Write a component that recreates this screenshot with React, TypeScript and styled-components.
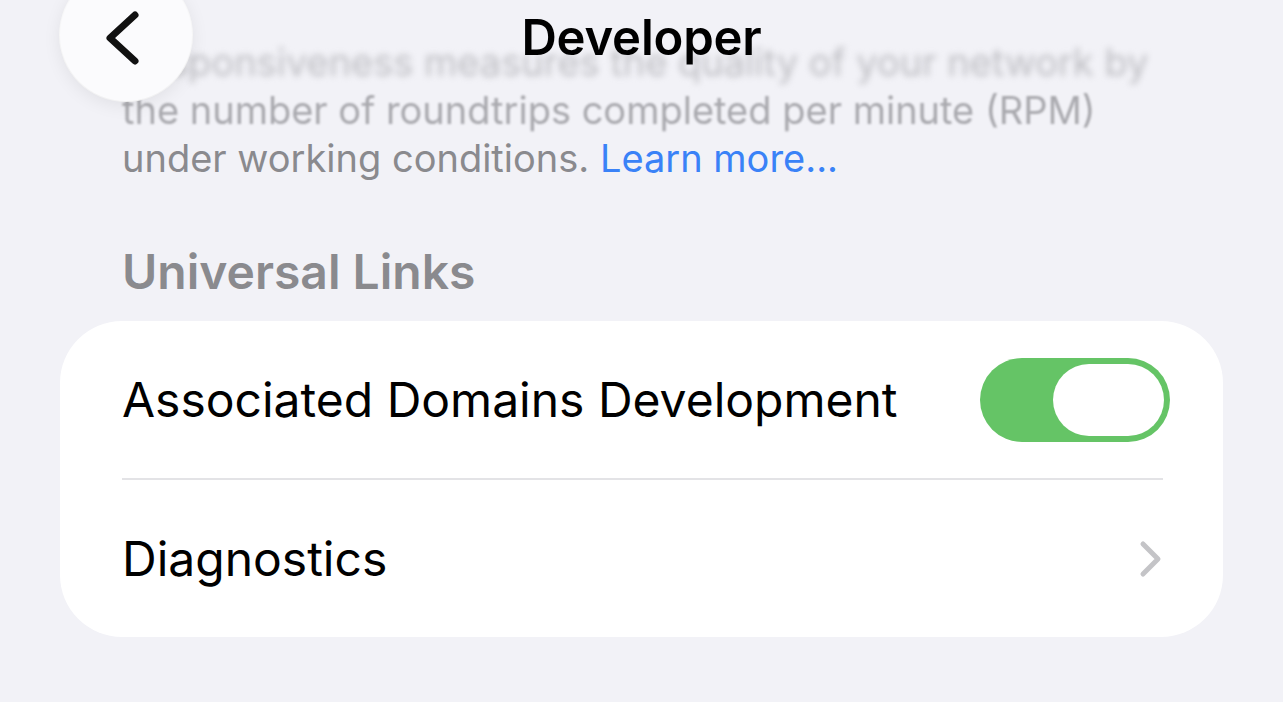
import React from 'react';
import styled, { createGlobalStyle } from 'styled-components';

const GlobalStyle = createGlobalStyle`
  html, body {
    margin: 0;
    padding: 0;
    background: #f2f2f7;
    font-family: Inter, "Noto Sans", sans-serif;
    overflow: hidden;
  }
`;

const footerLines = [
  { text: 'Responsiveness measures the quality of your network by', blur: 3.2, color: '#bdbdc2' },
  { text: 'the number of roundtrips completed per minute (RPM)', blur: 1.2, color: '#a9a9ae' },
];

const App: React.FC = () => {
  return (
    <Screen>
      <GlobalStyle />
      <NavBar>
        <BackButton aria-label="Back">
          <svg width="40" height="56" viewBox="0 0 40 56">
            <path
              d="M31 5 L6 28 L31 51"
              fill="none"
              stroke="#111"
              strokeWidth="7"
              strokeLinecap="round"
              strokeLinejoin="round"
            />
          </svg>
        </BackButton>
        <Title>Developer</Title>
      </NavBar>

      <Content>
        <Footer>
          {footerLines.map((line) => (
            <FooterLine key={line.text} $blur={line.blur} $color={line.color}>
              {line.text}
            </FooterLine>
          ))}
          <FooterLine $blur={0} $color="#8a8a8e">
            under working conditions. <LearnMore>Learn more...</LearnMore>
          </FooterLine>
        </Footer>

        <SectionHeader>Universal Links</SectionHeader>

        <Card>
          <Row>
            <RowLabel>Associated Domains Development</RowLabel>
            <Toggle>
              <Knob />
            </Toggle>
          </Row>
          <Separator />
          <Row>
            <RowLabel>Diagnostics</RowLabel>
            <svg width="24" height="38" viewBox="0 0 24 38">
              <path
                d="M4 4 L19 19 L4 34"
                fill="none"
                stroke="#c4c4c7"
                strokeWidth="5"
                strokeLinecap="round"
                strokeLinejoin="round"
              />
            </svg>
          </Row>
        </Card>
      </Content>
    </Screen>
  );
};

const Screen = styled.div`
  position: relative;
  width: 1283px;
  height: 702px;
  overflow: hidden;
  background: #f2f2f7;
`;

const NavBar = styled.div`
  position: absolute;
  top: 0;
  left: 0;
  right: 0;
  height: 80px;
  z-index: 2;
  display: flex;
  justify-content: center;
`;

const BackButton = styled.div`
  position: absolute;
  left: 60px;
  top: -31px;
  width: 132px;
  height: 132px;
  border-radius: 50%;
  background: #fbfbfd;
  box-shadow: 0 4px 18px rgba(0, 0, 0, 0.08), 0 0 0 1px rgba(255, 255, 255, 0.9);
  display: flex;
  align-items: center;
  justify-content: center;
  padding-top: 6px;
  padding-right: 4px;
  box-sizing: border-box;
`;

const Title = styled.div`
  margin-top: 10px;
  font-size: 49px;
  font-weight: 600;
  color: #000;
  line-height: 56px;
  letter-spacing: -0.2px;
`;

const Content = styled.div`
  padding: 38px 60px 0;
  display: flex;
  flex-direction: column;
`;

const Footer = styled.div`
  padding-left: 62px;
  display: flex;
  flex-direction: column;
`;

const FooterLine = styled.div<{ $blur: number; $color: string }>`
  font-size: 38px;
  line-height: 48px;
  color: ${(p) => p.$color};
  filter: ${(p) => (p.$blur ? `blur(${p.$blur}px)` : 'none')};
  white-space: nowrap;
`;

const LearnMore = styled.span`
  color: #3a82f7;
`;

const SectionHeader = styled.div`
  margin-top: 62px;
  padding-left: 62px;
  font-size: 48px;
  line-height: 56px;
  font-weight: 600;
  color: #8a8a8e;
`;

const Card = styled.div`
  margin-top: 21px;
  background: #fff;
  border-radius: 62px;
  display: flex;
  flex-direction: column;
`;

const Row = styled.div`
  height: 157px;
  display: flex;
  align-items: center;
  justify-content: space-between;
  padding: 0 60px 0 62px;
  &:first-child {
    padding-right: 53px;
  }
`;

const RowLabel = styled.div`
  font-size: 48px;
  color: #000;
`;

const Separator = styled.div`
  height: 2px;
  margin: 0 60px 0 62px;
  background: #e3e3e6;
`;

const Toggle = styled.div`
  width: 190px;
  height: 84px;
  border-radius: 42px;
  background: #65c466;
  display: flex;
  align-items: center;
  justify-content: flex-end;
  padding-right: 6px;
  box-sizing: border-box;
`;

const Knob = styled.div`
  width: 111px;
  height: 72px;
  border-radius: 36px;
  background: #fff;
`;

export default App;
